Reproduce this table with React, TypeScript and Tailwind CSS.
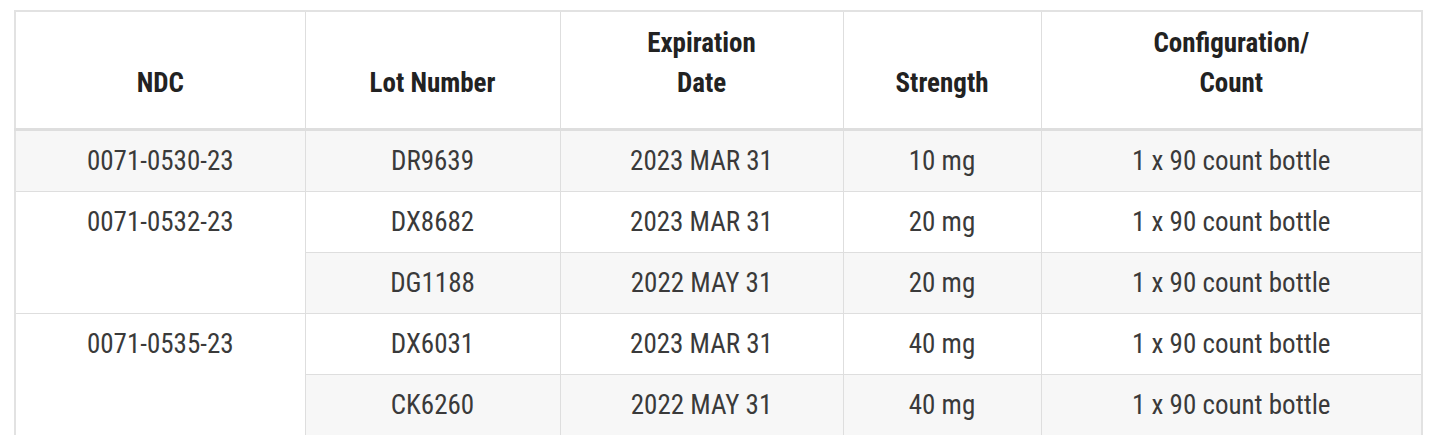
import React from 'react';

type Row = {
  ndc?: string;
  span?: number;
  lot: string;
  exp: string;
  strength: string;
  config: string;
};

const rows: Row[] = [
  { ndc: '0071-0530-23', span: 1, lot: 'DR9639', exp: '2023 MAR 31', strength: '10 mg', config: '1 x 90 count bottle' },
  { ndc: '0071-0532-23', span: 2, lot: 'DX8682', exp: '2023 MAR 31', strength: '20 mg', config: '1 x 90 count bottle' },
  { lot: 'DG1188', exp: '2022 MAY 31', strength: '20 mg', config: '1 x 90 count bottle' },
  { ndc: '0071-0535-23', span: 2, lot: 'DX6031', exp: '2023 MAR 31', strength: '40 mg', config: '1 x 90 count bottle' },
  { lot: 'CK6260', exp: '2022 MAY 31', strength: '40 mg', config: '1 x 90 count bottle' },
];

function App() {
  const th = 'border border-[#dedede] border-b-[3px] align-bottom pb-[25px] px-2 text-center font-bold text-[27px] leading-[40px] text-[#222]';
  return (
    <div className="min-h-[435px] bg-white pl-[14px] pr-[19px] pt-[10px] font-['Roboto_Condensed','Roboto',sans-serif] font-stretch-condensed">
      <table className="w-[1407px] table-fixed border-collapse border-2 border-[#e2e2e2]">
        <colgroup>
          <col className="w-[290px]" />
          <col className="w-[255px]" />
          <col className="w-[283px]" />
          <col className="w-[198px]" />
          <col className="w-[381px]" />
        </colgroup>
        <thead>
          <tr className="h-[118px]">
            <th className={th}>NDC</th>
            <th className={th}>Lot Number</th>
            <th className={th}>Expiration<br />Date</th>
            <th className={th}>Strength</th>
            <th className={th}>Configuration/<br />Count</th>
          </tr>
        </thead>
        <tbody className="text-[27px] leading-[42px] text-[#3a3a3a]">
          {rows.map((r, i) => {
            const bg = i % 2 === 0 ? 'bg-[#f7f7f7]' : 'bg-white';
            const td = `border border-[#dedede] py-[9px] px-2 text-center align-middle ${bg}`;
            return (
              <tr key={r.lot}>
                {r.ndc && (
                  <td rowSpan={r.span} className={`border border-[#dedede] pt-[9px] pb-[9px] px-2 text-center align-top ${bg}`}>
                    {r.ndc}
                  </td>
                )}
                <td className={td}>{r.lot}</td>
                <td className={td}>{r.exp}</td>
                <td className={td}>{r.strength}</td>
                <td className={td}>{r.config}</td>
              </tr>
            );
          })}
        </tbody>
      </table>
    </div>
  );
}

export default App;
